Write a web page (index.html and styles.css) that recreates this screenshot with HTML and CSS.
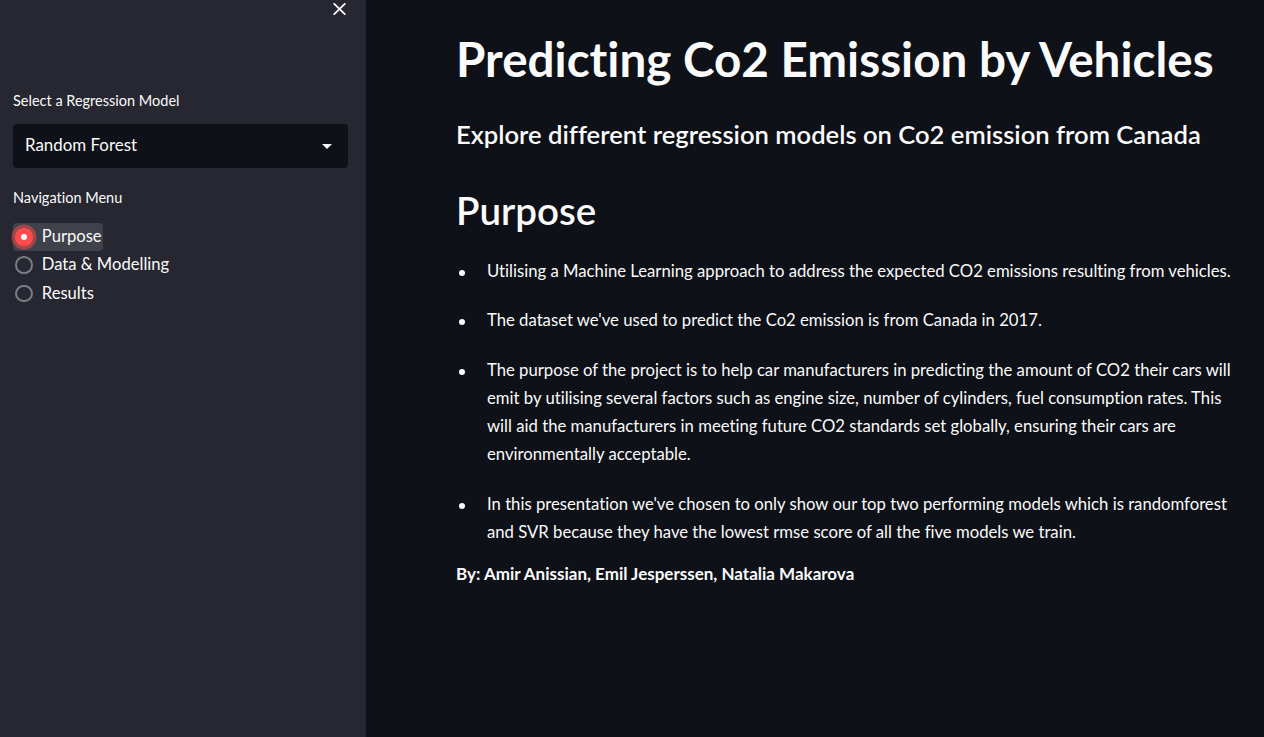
FILE: index.html
```html
<!DOCTYPE html>
<html lang="en">
<head>
<meta charset="utf-8">
<title>Predicting Co2 Emission by Vehicles</title>
<link rel="stylesheet" href="styles.css">
</head>
<body>
<div class="app">
  <aside class="sidebar">
    <div class="sidebar-head">
      <button class="close-btn" aria-label="Close sidebar">
        <svg width="13" height="12" viewBox="0 0 13 12"><path d="M1.2 0.8 L11.8 11.2 M11.8 0.8 L1.2 11.2" stroke="#fafafa" stroke-width="1.8" stroke-linecap="round" fill="none"/></svg>
      </button>
    </div>
    <label class="widget-label label-select">Select a Regression Model</label>
    <div class="select-box">
      <span class="select-value">Random Forest</span>
      <span class="select-arrow"></span>
    </div>
    <label class="widget-label label-nav">Navigation Menu</label>
    <div class="radio-group">
      <div class="radio-row active"><span class="radio-dot checked"></span><span class="radio-text">Purpose</span></div>
      <div class="radio-row"><span class="radio-dot"></span><span class="radio-text">Data &amp; Modelling</span></div>
      <div class="radio-row"><span class="radio-dot"></span><span class="radio-text">Results</span></div>
    </div>
  </aside>
  <main class="main">
    <h1 class="title">Predicting Co2 Emission by Vehicles</h1>
    <h3 class="subtitle">Explore different regression models on Co2 emission from Canada</h3>
    <h2 class="section">Purpose</h2>
    <ul class="bullets">
      <li>Utilising a Machine Learning approach to address the expected CO2 emissions resulting from vehicles.</li>
      <li>The dataset we've used to predict the Co2 emission is from Canada in 2017.</li>
      <li>The purpose of the project is to help car manufacturers in predicting the amount of CO2 their cars will emit by utilising several factors such as engine size, number of cylinders, fuel consumption rates. This will aid the manufacturers in meeting future CO2 standards set globally, ensuring their cars are environmentally acceptable.</li>
      <li>In this presentation we've chosen to only show our top two performing models which is randomforest and SVR because they have the lowest rmse score of all the five models we train.</li>
    </ul>
    <p class="authors">By: Amir Anissian, Emil Jesperssen, Natalia Makarova</p>
  </main>
</div>
</body>
</html>
```
FILE: styles.css
```css
* { box-sizing: border-box; }
html, body { margin: 0; padding: 0; height: 100%; }
body {
  font-family: "Lato", "Roboto", sans-serif;
  font-variant-ligatures: none;
  color: #fafafa;
  background: #0e1117;
}
.app {
  display: flex;
  height: 100vh;
  overflow: hidden;
}

/* Sidebar */
.sidebar {
  width: 366px;
  flex: none;
  background: #262730;
  padding: 3px 18px 0 13px;
  display: flex;
  flex-direction: column;
}
.sidebar-head {
  display: flex;
  justify-content: flex-end;
  padding-right: 2px;
  height: 13px;
}
.close-btn {
  background: none;
  border: 0;
  padding: 0;
  width: 13px;
  height: 12px;
  display: flex;
}
.widget-label {
  display: block;
  font-size: 14.5px;
  line-height: 1.2;
  color: #fafafa;
}
.label-select { margin-top: 76px; }
.select-box {
  margin-top: 15px;
  height: 44px;
  background: #0e1117;
  border-radius: 4px;
  display: flex;
  align-items: center;
  justify-content: space-between;
  padding: 0 16px 3px 12px;
}
.select-value {
  font-size: 16.9px;
  line-height: 1.2;
}
.select-arrow {
  width: 0;
  height: 0;
  border-left: 5px solid transparent;
  border-right: 5px solid transparent;
  border-top: 5px solid #fafafa;
  margin-top: 3px;
}
.label-nav { margin-top: 21px; }
.radio-group {
  margin-top: 16px;
  display: flex;
  flex-direction: column;
  align-items: flex-start;
}
.radio-row {
  height: 28.3px;
  display: flex;
  align-items: center;
  gap: 9px;
  padding: 0 1px 0 2.3px;
  border-radius: 4px;
}
.radio-row.active { background: #3f414b; }
.radio-dot {
  width: 17.5px;
  height: 17.5px;
  border-radius: 50%;
  border: 2px solid #7c7d84;
  flex: none;
  display: flex;
  align-items: center;
  justify-content: center;
}
.radio-dot.checked {
  border: 0;
  background: #ff4b4b;
  box-shadow: 0 0 0 3.5px rgba(255, 75, 75, 0.5);
}
.radio-dot.checked::after {
  content: "";
  width: 6px;
  height: 6px;
  border-radius: 50%;
  background: #fafafa;
}
.radio-text {
  font-size: 16.6px;
  line-height: 1.2;
}

/* Main */
.main {
  flex: 1;
  padding: 30px 17px 0 90px;
  background: #0e1117;
}
.title {
  margin: 0;
  font-size: 47.6px;
  font-weight: 700;
  line-height: 1.2;
}
.subtitle {
  margin: 32px 0 0;
  font-size: 25.6px;
  font-weight: 600;
  line-height: 1.2;
}
.section {
  margin: 37px 0 0;
  font-size: 38.5px;
  font-weight: 600;
  line-height: 1.2;
}
.bullets {
  margin: 24px 0 0;
  padding: 0;
  list-style: none;
  display: flex;
  flex-direction: column;
  gap: 21px;
}
.bullets li {
  display: flex;
  font-size: 16.7px;
  line-height: 28.3px;
}
.bullets li::before {
  content: "";
  flex: none;
  width: 6px;
  height: 6px;
  border-radius: 50%;
  background: #fafafa;
  margin: 13px 22px 0 3px;
}
.authors {
  margin: 14px 0 0;
  font-size: 17px;
  font-weight: 700;
  line-height: 28.3px;
}
```
